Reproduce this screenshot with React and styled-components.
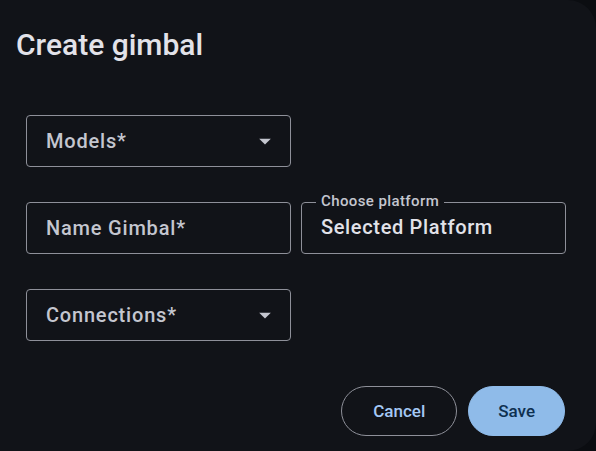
import React from "react"
import styled, { createGlobalStyle } from "styled-components"

const Global = createGlobalStyle`
    html, body {
        margin: 0;
        padding: 0;
        background: #0b0d11;
        font-family: Roboto, "Noto Sans", sans-serif;
    }
`

const Dialog = styled.div`
    width: 596px;
    height: 451px;
    box-sizing: border-box;
    background: #111318;
    border-radius: 0 28px 28px 0;
    display: flex;
    flex-direction: column;
    padding: 27px 31px 15px 16px;
`

const Title = styled.h2`
    margin: 0;
    font-size: 30px;
    line-height: 36px;
    font-weight: 500;
    color: #e2e2e9;
`

const Form = styled.div`
    display: grid;
    grid-template-columns: 265px 265px;
    grid-auto-rows: 52px;
    column-gap: 10px;
    row-gap: 35px;
    margin: 52px 0 0 10px;
`

const Field = styled.div`
    position: relative;
    box-sizing: border-box;
    border: 1px solid #8e9099;
    border-radius: 4px;
    display: flex;
    align-items: center;
    justify-content: space-between;
    padding: 0 11px 0 19px;
    grid-column: ${p => p.$col || "auto"};
`

const Placeholder = styled.span`
    font-size: 20px;
    font-weight: 500;
    color: #c4c6cf;
    letter-spacing: 0.8px;
`

const Value = styled.span`
    font-size: 20px;
    font-weight: 500;
    color: #e2e2e9;
    letter-spacing: 0.65px;
    margin-top: -2px;
`

const FloatLabel = styled.span`
    position: absolute;
    top: -11px;
    left: 14px;
    padding: 0 5px;
    background: #111318;
    font-size: 15px;
    line-height: 18px;
    font-weight: 500;
    color: #c4c6cf;
    letter-spacing: 0.4px;
`

const Actions = styled.div`
    margin-top: auto;
    display: flex;
    justify-content: flex-end;
    gap: 11px;
`

const Button = styled.button`
    height: 50px;
    border-radius: 25px;
    font-family: inherit;
    font-size: 17px;
    font-weight: 500;
    padding: 0 ${p => (p.$filled ? "29px" : "31px")};
    border: 1px solid ${p => (p.$filled ? "#8fbbe9" : "#8e9099")};
    background: ${p => (p.$filled ? "#8fbbe9" : "transparent")};
    color: ${p => (p.$filled ? "#0e3050" : "#a4c8f5")};
    cursor: pointer;
`

const Arrow = () => (
    <svg width="28" height="28" viewBox="0 0 24 24">
        <path d="M7 10l5 5 5-5z" fill="#c4c6cf" />
    </svg>
)

export default function App() {
    return (
        <>
            <Global />
            <Dialog>
                <Title>Create gimbal</Title>
                <Form>
                    <Field $col="1">
                        <Placeholder>Models*</Placeholder>
                        <Arrow />
                    </Field>
                    <Field $col="1">
                        <Placeholder>Name Gimbal*</Placeholder>
                    </Field>
                    <Field>
                        <FloatLabel>Choose platform</FloatLabel>
                        <Value>Selected Platform</Value>
                    </Field>
                    <Field $col="1">
                        <Placeholder>Connections*</Placeholder>
                        <Arrow />
                    </Field>
                </Form>
                <Actions>
                    <Button>Cancel</Button>
                    <Button $filled>Save</Button>
                </Actions>
            </Dialog>
        </>
    )
}
